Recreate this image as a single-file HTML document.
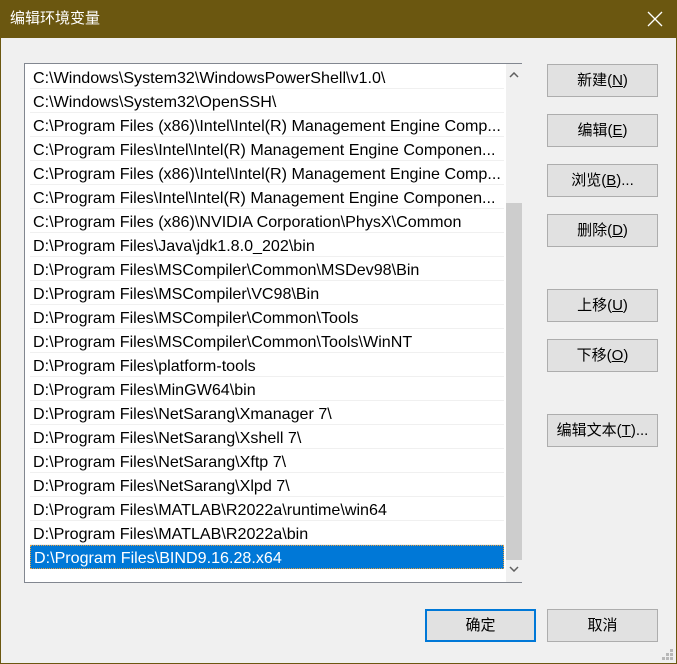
<!DOCTYPE html>
<html><head><meta charset="utf-8"><style>
*{margin:0;padding:0;box-sizing:border-box}
body{width:677px;height:664px;background:#f0f0f0;font-family:"Liberation Sans","Noto Sans CJK SC",sans-serif;position:relative;overflow:hidden}
.win{position:absolute;left:0;top:0;width:677px;height:664px;border:1px solid #6b5710;border-top:none}
.title{position:absolute;left:0;top:0;width:677px;height:38px;background:#6b5710;color:#fff;font-size:15px;line-height:38px;padding-left:10px}
.close{position:absolute;right:14px;top:11px;width:16px;height:16px}
.list{position:absolute;left:24px;top:63px;width:498px;height:520px;border:1px solid #828790;background:#fff}
.row{position:absolute;left:5px;width:474px;height:24px;border-bottom:1px solid #f0f0f0;font-size:16.1px;line-height:26px;padding-left:3px;color:#000;white-space:nowrap;overflow:hidden}
.row.sel{background:#0078d7;color:#fff;border:1px dotted #e8a040;line-height:24px}
.sb{position:absolute;left:481px;top:0;width:16px;height:518px;background:#f0f0f0}
.thumb{position:absolute;left:0;top:139px;width:16px;height:357px;background:#cdcdcd}
.btn{position:absolute;left:547px;width:111px;height:33px;border:1px solid #adadad;background:#e1e1e1;font-size:15px;text-align:center;line-height:31px;color:#000}
.btn u{text-decoration:underline}
.ok{border:2px solid #0078d7;line-height:29px}
.grip{position:absolute;right:3px;bottom:3px;width:12px;height:12px}
</style></head><body>
<div class="win"></div>
<div class="title">编辑环境变量
<svg class="close" viewBox="0 0 16 16"><path d="M1 1L15 15M15 1L1 15" stroke="#fff" stroke-width="1.3"/></svg></div>
<div class="list">
<div class="row" style="top:1px">C:\Windows\System32\WindowsPowerShell\v1.0\</div>
<div class="row" style="top:25px">C:\Windows\System32\OpenSSH\</div>
<div class="row" style="top:49px">C:\Program Files (x86)\Intel\Intel(R) Management Engine Comp...</div>
<div class="row" style="top:73px">C:\Program Files\Intel\Intel(R) Management Engine Componen...</div>
<div class="row" style="top:97px">C:\Program Files (x86)\Intel\Intel(R) Management Engine Comp...</div>
<div class="row" style="top:121px">C:\Program Files\Intel\Intel(R) Management Engine Componen...</div>
<div class="row" style="top:145px">C:\Program Files (x86)\NVIDIA Corporation\PhysX\Common</div>
<div class="row" style="top:169px">D:\Program Files\Java\jdk1.8.0_202\bin</div>
<div class="row" style="top:193px">D:\Program Files\MSCompiler\Common\MSDev98\Bin</div>
<div class="row" style="top:217px">D:\Program Files\MSCompiler\VC98\Bin</div>
<div class="row" style="top:241px">D:\Program Files\MSCompiler\Common\Tools</div>
<div class="row" style="top:265px">D:\Program Files\MSCompiler\Common\Tools\WinNT</div>
<div class="row" style="top:289px">D:\Program Files\platform-tools</div>
<div class="row" style="top:313px">D:\Program Files\MinGW64\bin</div>
<div class="row" style="top:337px">D:\Program Files\NetSarang\Xmanager 7\</div>
<div class="row" style="top:361px">D:\Program Files\NetSarang\Xshell 7\</div>
<div class="row" style="top:385px">D:\Program Files\NetSarang\Xftp 7\</div>
<div class="row" style="top:409px">D:\Program Files\NetSarang\Xlpd 7\</div>
<div class="row" style="top:433px">D:\Program Files\MATLAB\R2022a\runtime\win64</div>
<div class="row" style="top:457px">D:\Program Files\MATLAB\R2022a\bin</div>
<div class="row sel" style="top:481px">D:\Program Files\BIND9.16.28.x64</div>
<div class="sb"><div class="thumb"></div>
<svg style="position:absolute;left:3px;top:8px" width="10" height="6" viewBox="0 0 10 6"><path d="M1 5L5 1L9 5" stroke="#606060" stroke-width="1.5" fill="none"/></svg>
<svg style="position:absolute;left:3px;top:502px" width="10" height="6" viewBox="0 0 10 6"><path d="M1 1L5 5L9 1" stroke="#606060" stroke-width="1.5" fill="none"/></svg>
</div>
</div>
<div class="btn" style="top:64px">新建(<u>N</u>)</div>
<div class="btn" style="top:114px">编辑(<u>E</u>)</div>
<div class="btn" style="top:164px">浏览(<u>B</u>)...</div>
<div class="btn" style="top:214px">删除(<u>D</u>)</div>
<div class="btn" style="top:289px">上移(<u>U</u>)</div>
<div class="btn" style="top:339px">下移(<u>O</u>)</div>
<div class="btn" style="top:414px">编辑文本(<u>T</u>)...</div>
<div class="btn ok" style="left:425px;top:609px">确定</div>
<div class="btn" style="top:609px">取消</div>
<svg class="grip" viewBox="0 0 12 12" fill="#b8b8b8"><rect x="8" y="0" width="3" height="3"/><rect x="4" y="4" width="3" height="3"/><rect x="8" y="4" width="3" height="3"/><rect x="0" y="8" width="3" height="3"/><rect x="4" y="8" width="3" height="3"/><rect x="8" y="8" width="3" height="3"/></svg>
</body></html>
